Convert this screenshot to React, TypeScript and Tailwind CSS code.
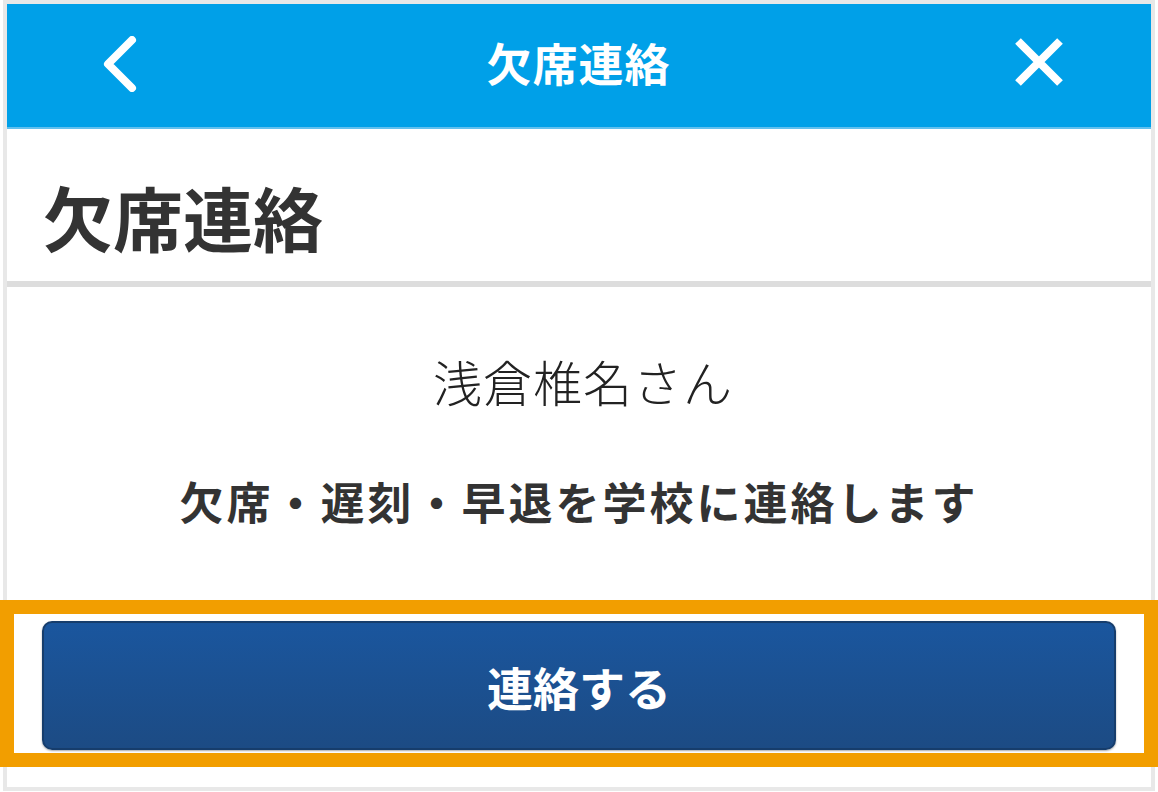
import React from "react";

const jp = { fontFamily: '"Noto Sans CJK JP", "Noto Sans", sans-serif' };

function BackIcon() {
  return (
    <svg width="40" height="56" viewBox="0 0 40 56" fill="none">
      <path d="M32 4 L8 28 L32 52" stroke="white" strokeWidth="8" strokeLinecap="round" strokeLinejoin="round" />
    </svg>
  );
}

function CloseIcon() {
  return (
    <svg width="48" height="48" viewBox="0 0 48 48" fill="none">
      <path d="M3 3 L45 45 M45 3 L3 45" stroke="white" strokeWidth="8" strokeLinecap="butt" />
    </svg>
  );
}

export default function App() {
  return (
    <div className="relative w-[1158px] h-[792px] bg-white overflow-hidden" style={jp}>
      <div className="ml-[3px] w-[1152px] h-[791px] border-4 border-[#e8e8e8] flex flex-col">
        {/* Navigation bar */}
        <div className="h-[125px] bg-[#00a0e8] border-b-2 border-[#62c0ee] grid grid-cols-[1fr_auto_1fr] items-center pl-[93px] pr-[88px] shrink-0">
          <div className="flex justify-start -mt-[4px]">
            <BackIcon />
          </div>
          <div className="text-white font-bold text-[45px] leading-none tracking-[1px] -mt-[6px] pr-[6px]">欠席連絡</div>
          <div className="flex justify-end -mt-[8px]">
            <CloseIcon />
          </div>
        </div>

        {/* Page title */}
        <div className="h-[152px] pl-[36px] pt-[53px] shrink-0">
          <h1 className="text-[#333333] font-bold text-[70px] leading-none">欠席連絡</h1>
        </div>
        <div className="h-[6px] bg-[#dddddd] shrink-0" />

        {/* Body */}
        <div className="flex flex-col items-center flex-1">
          <p className="mt-[69px] text-[#222222] font-light text-[49px] leading-none tracking-[1px] pl-[8px]">浅倉椎名さん</p>
          <p className="mt-[74px] text-[#333333] font-bold text-[44px] leading-none tracking-[3px]">
            欠席・遅刻・早退を学校に連絡します
          </p>
          <div className="mt-[98px] w-full px-[35px]">
            <button className="w-full h-[129px] rounded-[10px] border-2 border-[#163d6c] bg-gradient-to-b from-[#1a569e] to-[#1c4b84] shadow-[0_1px_2px_rgba(0,0,0,0.35)] text-white font-bold text-[46px] leading-none">
              連絡する
            </button>
          </div>
        </div>
      </div>

      {/* Highlight frame around the action */}
      <div className="absolute left-0 top-[600px] w-[1158px] h-[167px] border-[14px] border-[#f29e00] pointer-events-none" />
    </div>
  );
}
